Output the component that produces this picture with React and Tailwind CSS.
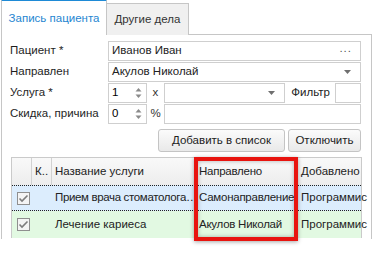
import React from 'react';

const label = 'w-[98px] shrink-0 text-[#1e1e1e] whitespace-nowrap';
const box = 'h-[20px] border border-[#cfcfcf] bg-white flex items-center';

function Spin({ value }) {
  return (
    <div className={`${box} w-[39px] shrink-0 pl-[3px] pr-[4px] justify-between`}>
      <span>{value}</span>
      <svg width="7" height="12" viewBox="0 0 7 12">
        <path d="M3.5 1 L6.5 4.5 H0.5 Z" fill="#8a8a8a" />
        <path d="M3.5 11 L6.5 7.5 H0.5 Z" fill="#8a8a8a" />
      </svg>
    </div>
  );
}

function Arrow() {
  return (
    <svg width="7" height="4" viewBox="0 0 7 4">
      <path d="M0 0 H7 L3.5 4 Z" fill="#6f6f6f" />
    </svg>
  );
}

function Check() {
  return (
    <div className="w-[13px] h-[13px] border border-[#8f8f8f] bg-[#f4f4f4] flex items-center justify-center">
      <svg width="11" height="9" viewBox="0 0 11 9">
        <path d="M1.5 4.5 L4 7 L9.5 1.5" stroke="#7c7c7c" strokeWidth="1.6" fill="none" />
      </svg>
    </div>
  );
}

const col1 = 'w-[20px] shrink-0';
const col3 = 'w-[144px] shrink-0 pl-[3px] overflow-hidden';
const col4 = 'w-[102px] shrink-0 pl-[3px] overflow-hidden tracking-[-0.25px]';

export default function App() {
  return (
    <div className="relative w-[374px] h-[255px] bg-white overflow-hidden text-[11.5px] leading-none" style={{ fontFamily: '"Liberation Sans", sans-serif' }}>
      {/* tabs */}
      <div className="flex items-end h-[35px] pl-[1px] -mb-px relative z-10">
        <div className="h-[36px] w-[106px] bg-white border-t-2 border-t-[#1e8ad6] border-l border-r border-[#c6c6c6] flex items-center justify-center pt-[1px] text-[#1f86d1]">
          Запись пациента
        </div>
        <div className="h-[32px] w-[82px] bg-[#f0f0f0] border-t border-r border-[#c6c6c6] flex items-center justify-center pt-[1px] text-[#333]">
          Другие дела
        </div>
      </div>

      {/* panel */}
      <div className="ml-[1px] w-[371px] h-[205px] border-t border-l border-r border-[#c6c6c6] pl-[8px] pr-[10px] pt-[6px]">
        <div className="flex flex-col gap-[1px]">
          <div className="flex items-center h-[20px]">
            <span className={label}>Пациент *</span>
            <div className={`${box} flex-1 bg-[#efefef] pl-[3px] pr-[8px] justify-between`}>
              <span className="text-[#222]">Иванов Иван</span>
              <span className="text-[#555] tracking-[1px] -mt-[4px]">...</span>
            </div>
          </div>
          <div className="flex items-center h-[20px]">
            <span className={label}>Направлен</span>
            <div className={`${box} flex-1 pl-[3px] pr-[9px] justify-between`}>
              <span className="text-[#222]">Акулов Николай</span>
              <Arrow />
            </div>
          </div>
          <div className="flex items-center h-[20px]">
            <span className={label}>Услуга *</span>
            <Spin value="1" />
            <span className="w-[17px] text-center text-[#333]">x</span>
            <div className={`${box} w-[122px] justify-end pr-[9px]`}>
              <Arrow />
            </div>
            <span className="ml-[6px] w-[44px] text-[#222]">Фильтр</span>
            <div className={`${box} w-[26px]`} />
          </div>
          <div className="flex items-center h-[20px]">
            <span className={label}>Скидка, причина</span>
            <Spin value="0" />
            <span className="w-[17px] text-center text-[#333]">%</span>
            <div className={`${box} flex-1`} />
          </div>
        </div>

        {/* buttons */}
        <div className="flex justify-end gap-[3px] mt-[5px]">
          <button className="h-[23px] w-[127px] rounded-[3px] border border-[#c4c4c4] bg-gradient-to-b from-[#fbfbfb] to-[#e9e9e9] text-[#222]">
            Добавить в список
          </button>
          <button className="h-[23px] w-[73px] rounded-[3px] border border-[#c4c4c4] bg-gradient-to-b from-[#fbfbfb] to-[#e9e9e9] text-[#222]">
            Отключить
          </button>
        </div>

        {/* grid */}
        <div className="mt-[5px] ml-[1px] w-[351px] border-l border-t border-r border-[#cacaca]">
          <div className="flex h-[28px] bg-gradient-to-b from-[#f9f9f9] to-[#ededed] border-b border-[#cacaca] text-[#222]">
            <div className={`${col1} border-r border-[#d2d2d2]`} />
            <div className={`${col1} border-r border-[#d2d2d2] flex items-center pl-[3px]`}>К..</div>
            <div className={`${col3} border-r border-[#d2d2d2] flex items-center`}>Название услуги</div>
            <div className={`${col4} border-r border-[#d2d2d2] flex items-center`}>Направлено</div>
            <div className="flex-1 flex items-center pl-[3px] whitespace-nowrap">Добавлено</div>
          </div>
          <div className="flex h-[26px] bg-[#dcedfd] border-t border-b border-dotted border-[#222] -mt-px text-[#222] items-center whitespace-nowrap">
            <div className={`${col1} flex justify-center pl-[2px]`}><Check /></div>
            <div className={col1} />
            <div className={`${col3} tracking-[-0.35px]`}>Прием врача стоматолога…</div>
            <div className={col4}>Самонаправление</div>
            <div className="flex-1 pl-[3px]">Программис</div>
          </div>
          <div className="flex h-[27px] bg-[#e2f9e2] text-[#222] items-center whitespace-nowrap">
            <div className={`${col1} flex justify-center pl-[2px]`}><Check /></div>
            <div className={col1} />
            <div className={col3}>Лечение кариеса</div>
            <div className={col4}>Акулов Николай</div>
            <div className="flex-1 pl-[3px]">Программис</div>
          </div>
        </div>
      </div>

      {/* highlight */}
      <div className="absolute left-[194px] top-[157px] w-[104px] h-[84px] border-[4px] border-[#e8140f] shadow-[0_1px_4px_rgba(0,0,0,0.35),inset_0_0_4px_rgba(0,0,0,0.3)]" />
    </div>
  );
}
